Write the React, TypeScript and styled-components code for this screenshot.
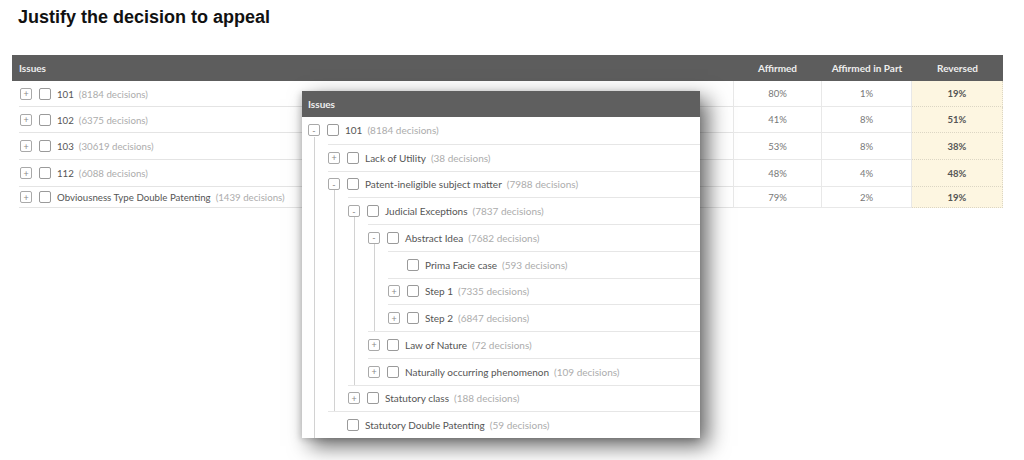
import React from 'react';
import styled, { createGlobalStyle } from 'styled-components';

const GlobalStyle = createGlobalStyle`
  html, body { margin: 0; padding: 0; background: #fff; }
  body { font-family: Lato, "Open Sans", sans-serif; }
  * { box-sizing: border-box; }
`;

const Page = styled.div`
  position: relative;
  width: 1024px;
  height: 460px;
  padding: 7px 0 0 12px;
  overflow: hidden;
`;

const Title = styled.h1`
  margin: 0 0 0 6px;
  font-family: "Liberation Sans", Arial, sans-serif;
  font-weight: bold;
  font-size: 18px;
  line-height: 21px;
  color: #111;
`;

const Table = styled.div`
  margin-top: 27px;
  width: 991px;
  display: grid;
  grid-template-columns: 721px 89px 90px 91px;
  grid-template-rows: 26px 26px 26px 27px 27px 21px;
`;

const HeadCell = styled.div<{ $center?: boolean }>`
  background: #5d5d5d;
  color: #eeeeee;
  font-weight: bold;
  font-size: 10px;
  display: flex;
  align-items: center;
  justify-content: ${(p) => (p.$center ? 'center' : 'flex-start')};
  padding-left: ${(p) => (p.$center ? '0' : '7px')};
`;

const IssueCell = styled.div`
  padding-left: 7px;
  display: flex;
`;

const IssueInner = styled.div`
  flex: 1;
  display: flex;
  align-items: center;
  padding-left: 1px;
  border-bottom: 1px solid #e4e4e4;
`;

const DataCell = styled.div<{ $rev?: boolean; $first?: boolean }>`
  display: flex;
  align-items: center;
  justify-content: center;
  font-size: 9.5px;
  color: ${(p) => (p.$rev ? '#555' : '#777')};
  font-weight: ${(p) => (p.$rev ? 'bold' : 'normal')};
  background: ${(p) => (p.$rev ? '#fdf6e1' : '#fff')};
  border-bottom: 1px ${(p) => (p.$rev ? 'dotted #dcd6c4' : 'solid #e8e8e8')};
  border-right: 1px ${(p) => (p.$rev ? 'dotted #dcd6c4' : 'solid #e8e8e8')};
  border-left: ${(p) => (p.$first ? '1px solid #e8e8e8' : '0')};
`;

const ExpandBox = styled.span`
  width: 12px;
  height: 12px;
  flex: none;
  border: 1px solid #a9a9a9;
  border-radius: 2px;
  background: #fff;
  color: #888;
  font-size: 9px;
  line-height: 9px;
  display: flex;
  align-items: center;
  justify-content: center;
`;

const Spacer = styled.span`
  width: 12px;
  height: 12px;
  flex: none;
`;

const Check = styled.span`
  width: 12px;
  height: 12px;
  flex: none;
  margin-left: 7px;
  border: 1px solid #9a9a9a;
  border-radius: 2px;
  background: #fff;
`;

const Label = styled.span<{ $size: number }>`
  margin-left: 6px;
  font-size: ${(p) => p.$size}px;
  color: #555;
  white-space: nowrap;
`;

const Count = styled.span`
  margin-left: 5px;
  color: #acacac;
`;

const Popup = styled.div`
  position: absolute;
  left: 302px;
  top: 91px;
  width: 398px;
  background: #fff;
  box-shadow: 8px 8px 20px rgba(0, 0, 0, 0.6), -2px 2px 6px rgba(0, 0, 0, 0.15);
`;

const PopupHead = styled.div`
  height: 26px;
  background: #5f5f5f;
  color: #eeeeee;
  font-weight: bold;
  font-size: 10px;
  display: flex;
  align-items: center;
  padding-left: 6px;
`;

const TreeRoot = styled.div`
  padding-left: 6px;
`;

const Row = styled.div<{ $top: boolean }>`
  height: 26.75px;
  display: flex;
  align-items: center;
  border-top: ${(p) => (p.$top ? '1px solid #e6e6e6' : '0')};
`;

const Children = styled.div`
  margin-left: 6px;
  margin-top: -7px;
  padding-top: 7px;
  padding-left: 13px;
  border-left: 1px solid #d2d2d2;
`;

type Node = {
  label: string;
  count: number;
  box?: '+' | '-' | null;
  children?: Node[];
};

const tree: Node = {
  label: '101',
  count: 8184,
  box: '-',
  children: [
    { label: 'Lack of Utility', count: 38, box: '+' },
    {
      label: 'Patent-ineligible subject matter',
      count: 7988,
      box: '-',
      children: [
        {
          label: 'Judicial Exceptions',
          count: 7837,
          box: '-',
          children: [
            {
              label: 'Abstract Idea',
              count: 7682,
              box: '-',
              children: [
                { label: 'Prima Facie case', count: 593, box: null },
                { label: 'Step 1', count: 7335, box: '+' },
                { label: 'Step 2', count: 6847, box: '+' },
              ],
            },
            { label: 'Law of Nature', count: 72, box: '+' },
            { label: 'Naturally occurring phenomenon', count: 109, box: '+' },
          ],
        },
        { label: 'Statutory class', count: 188, box: '+' },
      ],
    },
    { label: 'Statutory Double Patenting', count: 59, box: null },
  ],
};

const Entry = ({ node, top }: { node: Node; top: boolean }) => (
  <>
    <Row $top={top}>
      {node.box ? <ExpandBox>{node.box}</ExpandBox> : <Spacer />}
      <Check />
      <Label $size={10}>
        {node.label}
        <Count>({node.count} decisions)</Count>
      </Label>
    </Row>
    {node.children && (
      <Children>
        {node.children.map((c) => (
          <Entry key={c.label} node={c} top />
        ))}
      </Children>
    )}
  </>
);

const rows = [
  { label: '101', count: 8184, a: '80%', p: '1%', r: '19%' },
  { label: '102', count: 6375, a: '41%', p: '8%', r: '51%' },
  { label: '103', count: 30619, a: '53%', p: '8%', r: '38%' },
  { label: '112', count: 6088, a: '48%', p: '4%', r: '48%' },
  { label: 'Obviousness Type Double Patenting', count: 1439, a: '79%', p: '2%', r: '19%' },
];

export default function App() {
  return (
    <>
      <GlobalStyle />
      <Page>
        <Title>Justify the decision to appeal</Title>
        <Table>
          <HeadCell>Issues</HeadCell>
          <HeadCell $center>Affirmed</HeadCell>
          <HeadCell $center>Affirmed in Part</HeadCell>
          <HeadCell $center>Reversed</HeadCell>
          {rows.map((r) => (
            <React.Fragment key={r.label}>
              <IssueCell>
                <IssueInner>
                  <ExpandBox>+</ExpandBox>
                  <Check />
                  <Label $size={9.7}>
                    {r.label}
                    <Count>({r.count} decisions)</Count>
                  </Label>
                </IssueInner>
              </IssueCell>
              <DataCell $first>{r.a}</DataCell>
              <DataCell>{r.p}</DataCell>
              <DataCell $rev>{r.r}</DataCell>
            </React.Fragment>
          ))}
        </Table>
        <Popup>
          <PopupHead>Issues</PopupHead>
          <TreeRoot>
            <Entry node={tree} top={false} />
          </TreeRoot>
        </Popup>
      </Page>
    </>
  );
}
